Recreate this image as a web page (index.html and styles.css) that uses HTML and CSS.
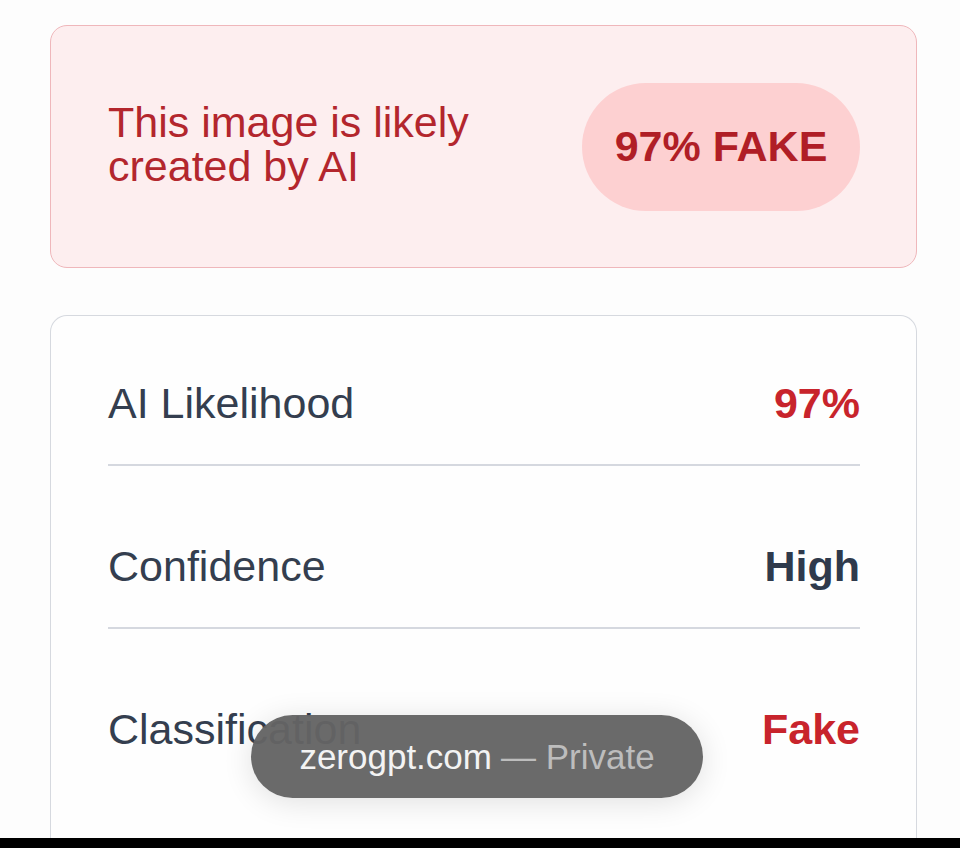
FILE: index.html
```html
<!DOCTYPE html>
<html lang="en">
<head>
    <meta charset="UTF-8">
    <meta name="viewport" content="width=device-width, initial-scale=1.0">
    <title>Resultado da análise</title>
    <link rel="stylesheet" href="styles.css">
</head>
<body>

<div id="pagina">
    <div class="veredito">
        <p class="veredito-texto">This image is likely<br>created by AI</p>
        <div class="selo">97% FAKE</div>
    </div>

    <div class="detalhes">
        <div class="linha">
            <span class="rotulo">AI Likelihood</span>
            <span class="valor vermelho">97%</span>
        </div>
        <div class="linha">
            <span class="rotulo">Confidence</span>
            <span class="valor">High</span>
        </div>
        <div class="linha ultima">
            <span class="rotulo">Classification</span>
            <span class="valor vermelho">Fake</span>
        </div>
    </div>
</div>

<!-- aviso do navegador por cima -->
<div id="aviso"><span class="dominio">zerogpt.com</span> <span class="modo">— Private</span></div>
<div id="barra"></div>

</body>
</html>
```

FILE: styles.css
```css
html, body{
    margin: 0;
    height: 100%;
    overflow: hidden;
}
body{
    font-family: "Liberation Sans", Arial, Helvetica, sans-serif;
    background-color: #fdfdfd;
}
#pagina{
    padding: 25px 43px 0 50px;
    display: flex;
    flex-direction: column;
    gap: 47px;
}
.veredito{
    height: 243px;
    box-sizing: border-box;
    background-color: #fdeeef;
    border: 1.5px solid #efb7bb;
    border-radius: 17px;
    display: flex;
    align-items: center;
    justify-content: space-between;
    padding: 0 56px 0 57px;
}
.veredito-texto{
    margin: 0;
    margin-top: -6px;
    font-size: 43px;
    line-height: 44px;
    color: #b3262d;
}
.selo{
    width: 278px;
    height: 128px;
    border-radius: 64px;
    background-color: #fdd0d1;
    color: #b01e26;
    font-size: 43px;
    font-weight: bold;
    display: flex;
    align-items: center;
    justify-content: center;
}
.detalhes{
    background-color: #fefefe;
    border: 1.5px solid #d6d9df;
    border-bottom: none;
    border-radius: 17px 17px 0 0;
    padding: 25px 56px 58px 57px;
}
.linha{
    display: flex;
    justify-content: space-between;
    align-items: center;
    font-size: 43px;
    line-height: 48px;
    padding: 76px 0 37px;
    border-bottom: 2px solid #d5d8df;
}
.linha:first-child{
    padding-top: 38px;
}
.linha.ultima{
    border-bottom: none;
}
.rotulo{
    color: #343e4f;
}
.valor{
    font-weight: bold;
    color: #2f3a4c;
}
.vermelho{
    color: #c8242c;
}
#aviso{
    position: absolute;
    left: 251px;
    top: 715px;
    width: 452px;
    height: 83px;
    border-radius: 42px;
    background-color: rgba(100, 100, 100, 0.96);
    box-shadow: 0 4px 30px rgba(0, 0, 0, 0.12);
    display: flex;
    align-items: center;
    justify-content: center;
    gap: 9px;
    font-size: 35px;
}
.dominio{
    color: #f3f3f3;
}
.modo{
    color: #bdbdbd;
}
#barra{
    position: fixed;
    left: 0;
    right: 0;
    bottom: 0;
    height: 10px;
    background-color: #000;
}
```
